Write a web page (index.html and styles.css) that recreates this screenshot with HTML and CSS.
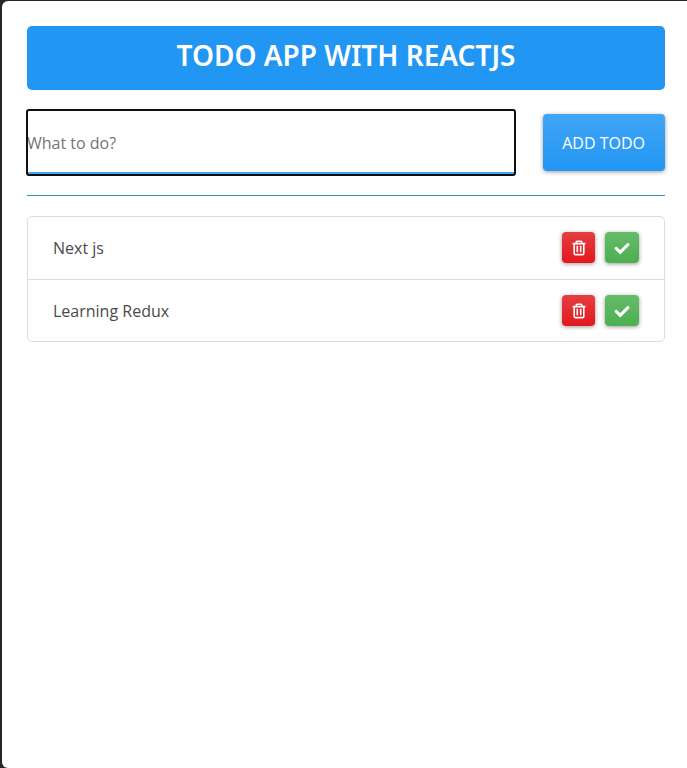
FILE: index.html
```html
<!DOCTYPE html>
<html lang="en">
<head>
<meta charset="utf-8">
<meta name="viewport" content="width=device-width, initial-scale=1">
<title>Todo App</title>
<link rel="stylesheet" href="styles.css">
</head>
<body>
<svg class="sprite" aria-hidden="true">
  <symbol id="trash" viewBox="0 0 16 16">
    <path d="M5.2 3.4V2.2c0-.5.4-.9.9-.9h3.8c.5 0 .9.4.9.9v1.2M1.6 3.6h12.8M3.2 4v9.6c0 .6.4 1 1 1h7.6c.6 0 1-.4 1-1V4M6.3 5.8v6.4M9.7 5.8v6.4" fill="none" stroke="currentColor" stroke-width="1.6"/>
  </symbol>
  <symbol id="check" viewBox="0 0 16 16">
    <path d="M2.2 8.4l4 4 7.7-7.8" fill="none" stroke="currentColor" stroke-width="3" stroke-linecap="round"/>
  </symbol>
</svg>
<main class="app">
  <h1 class="title">TODO APP WITH REACTJS</h1>
  <form class="entry">
    <input class="entry-input" type="text" placeholder="What to do?" aria-label="What to do?">
    <button class="btn btn-add" type="button">ADD TODO</button>
  </form>
  <hr class="divider">
  <ul class="list">
    <li class="item">
      <span class="item-name">Next js</span>
      <button class="btn btn-icon btn-delete" type="button" aria-label="Delete Next js"><svg class="icon"><use href="#trash"/></svg></button>
      <button class="btn btn-icon btn-done" type="button" aria-label="Complete Next js"><svg class="icon"><use href="#check"/></svg></button>
    </li>
    <li class="item">
      <span class="item-name">Learning Redux</span>
      <button class="btn btn-icon btn-delete" type="button" aria-label="Delete Learning Redux"><svg class="icon"><use href="#trash"/></svg></button>
      <button class="btn btn-icon btn-done" type="button" aria-label="Complete Learning Redux"><svg class="icon"><use href="#check"/></svg></button>
    </li>
  </ul>
</main>
</body>
</html>
```
FILE: styles.css
```css
* {
  box-sizing: border-box;
}

body {
  display: flex;
  min-height: 100vh;
  margin: 0;
  padding: 1px 0 0 2px;
  background: #262628;
  color: #4a4a4a;
  font: 16px/24px "Open Sans", "Noto Sans", sans-serif;
}

.sprite {
  position: absolute;
  width: 0;
  height: 0;
}

.app {
  flex: 1;
  padding: 25px 22px 25px 25px;
  border-radius: 6px 0 0 6px;
  background: #fff;
}

.title {
  margin: 0 0 20px;
  padding: 9px 16px 15px;
  border-radius: 5px;
  background: #2196f3;
  color: #fff;
  font-family: "Noto Sans", sans-serif;
  font-size: 28px;
  font-weight: 600;
  line-height: 40px;
  text-align: center;
}

.entry {
  display: flex;
  align-items: center;
  gap: 28px;
}

.entry-input {
  flex: 1;
  min-width: 0;
  height: 65px;
  padding: 3px 0 0;
  border: 0;
  border-bottom: 3px solid #42a5f5;
  border-radius: 2px;
  outline: 2px solid #101010;
  outline-offset: -1px;
  background: #fff;
  color: inherit;
  font: inherit;
}

.entry-input::placeholder {
  color: #757575;
  opacity: 1;
}

.btn {
  display: flex;
  align-items: center;
  justify-content: center;
  padding: 0;
  border: 0;
  border-radius: 4px;
  box-shadow: 0 1px 4px rgba(0, 0, 0, 0.4);
  color: #fff;
  font: inherit;
  cursor: pointer;
}

.btn-add {
  height: 57px;
  padding: 0 20px 0 19px;
  background: linear-gradient(#42a5f5, #2196f3);
}

.divider {
  height: 1px;
  margin: 20px 0;
  border: 0;
  background: #2a93b4;
}

.list {
  margin: 0;
  padding: 0;
  border: 1px solid #dcdcdc;
  border-radius: 5px;
  list-style: none;
}

.item {
  display: flex;
  align-items: flex-start;
  gap: 10px;
  height: 62px;
  padding: 15px 25px 0;
}

.item + .item {
  border-top: 1px solid #dcdcdc;
}

.item-name {
  flex: 1;
  line-height: 32px;
}

.btn-icon {
  width: 34px;
  height: 31px;
}

.btn-delete {
  width: 33px;
  background: linear-gradient(#e53e42, #e3181e);
}

.btn-done {
  background: linear-gradient(#66bb6a, #4caf50);
}

.icon {
  width: 16px;
  height: 16px;
}
```
